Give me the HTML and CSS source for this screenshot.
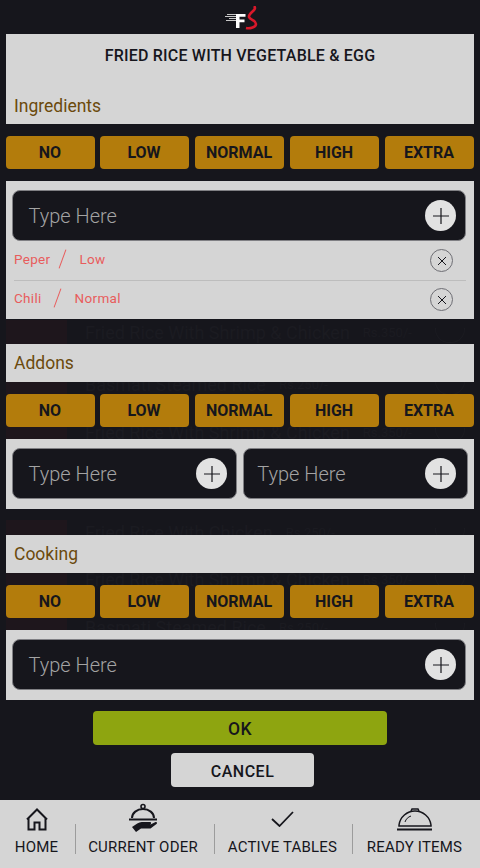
FILE: index.html
```html
<!DOCTYPE html>
<html lang="en">
<head>
    <meta charset="UTF-8">
    <meta name="viewport" content="width=device-width, initial-scale=1.0">
    <title>Item Options</title>
    <link rel="stylesheet" href="styles.css">
</head>
<body>
    <!-- dimmed list behind the dialog -->
    <div class="ghost">
        <div class="ghost-row r1"><span class="ghost-thumb"></span><span class="ghost-name">Fried Rice With Shrimp &amp; Chicken</span><span class="ghost-price">Rs.350/-</span><span class="ghost-icon"></span></div>
        <div class="ghost-row r2"><span class="ghost-thumb"></span><span class="ghost-name">Basmati Steamed Rice</span><span class="ghost-price">Rs.250/-</span><span class="ghost-icon"></span></div>
        <div class="ghost-row r3"><span class="ghost-thumb"></span><span class="ghost-name">Fried Rice With Shrimp &amp; Chicken</span><span class="ghost-price">Rs.350/-</span><span class="ghost-icon"></span></div>
        <div class="ghost-row r4"><span class="ghost-thumb"></span><span class="ghost-name">Fried Rice With Chicken</span><span class="ghost-price">Rs.250/-</span><span class="ghost-icon"></span></div>
        <div class="ghost-row r5"><span class="ghost-thumb"></span><span class="ghost-name">Fried Rice With Shrimp &amp; Chicken</span><span class="ghost-price">Rs.350/-</span><span class="ghost-icon"></span></div>
        <div class="ghost-row r6"><span class="ghost-thumb"></span><span class="ghost-name">Basmati Steamed Rice</span><span class="ghost-price">Rs.250/-</span><span class="ghost-icon"></span></div>
    </div>

    <header class="logo">
        <svg width="34" height="24" viewBox="0 0 34 24">
            <path d="M2 8.500h10M0 10.500h11M4 12.500h7M1 14.500h10" stroke="#c8c8c8" stroke-width="1" fill="none"/>
            <path d="M11 8h9.500v2.800H14.500v2.700h5v2.700h-5V22H11z" fill="#fff"/>
            <path d="M29 0C33 4 23 7 24 11C25 14 31 14 31 18C31 21 25 23 21 22" stroke="#d8182a" stroke-width="2.600" fill="none"/>
        </svg>
    </header>

    <main class="dialog">
        <section class="panel panel-title">
            <h1>FRIED RICE WITH VEGETABLE &amp; EGG</h1>
            <h2>Ingredients</h2>
        </section>
        <div class="levels">
            <button>NO</button><button>LOW</button><button>NORMAL</button><button>HIGH</button><button>EXTRA</button>
        </div>
        <section class="panel panel-body panel-list">
            <div class="field">
                <span>Type Here</span>
                <span class="add"><svg width="18" height="18" viewBox="0 0 18 18"><path d="M9 1v16M1 9h16"/></svg></span>
            </div>
            <div class="picked">
                <span>Peper</span><span class="slash w1"></span><span>Low</span>
                <span class="remove"><svg width="10" height="10" viewBox="0 0 10 10"><path d="M1 1l8 8M9 1l-8 8"/></svg></span>
            </div>
            <div class="picked last">
                <span>Chili</span><span class="slash w2"></span><span>Normal</span>
                <span class="remove"><svg width="10" height="10" viewBox="0 0 10 10"><path d="M1 1l8 8M9 1l-8 8"/></svg></span>
            </div>
        </section>

        <section class="panel panel-head addons"><h2>Addons</h2></section>
        <div class="levels">
            <button>NO</button><button>LOW</button><button>NORMAL</button><button>HIGH</button><button>EXTRA</button>
        </div>
        <section class="panel panel-body double">
            <div class="field">
                <span>Type Here</span>
                <span class="add"><svg width="18" height="18" viewBox="0 0 18 18"><path d="M9 1v16M1 9h16"/></svg></span>
            </div>
            <div class="field field-right">
                <span>Type Here</span>
                <span class="add"><svg width="18" height="18" viewBox="0 0 18 18"><path d="M9 1v16M1 9h16"/></svg></span>
            </div>
        </section>

        <section class="panel panel-head cooking"><h2>Cooking</h2></section>
        <div class="levels">
            <button>NO</button><button>LOW</button><button>NORMAL</button><button>HIGH</button><button>EXTRA</button>
        </div>
        <section class="panel panel-body panel-single">
            <div class="field">
                <span>Type Here</span>
                <span class="add"><svg width="18" height="18" viewBox="0 0 18 18"><path d="M9 1v16M1 9h16"/></svg></span>
            </div>
        </section>

        <div class="actions">
            <button class="ok">OK</button>
            <button class="cancel">CANCEL</button>
        </div>
    </main>

    <nav class="tabs">
        <a class="tab tab-home">
            <svg width="24" height="24" viewBox="0 0 24 24"><path d="M2 12.500L12 2.500l10 10M3.500 11v11.500h6v-7h5v7h6V11" fill="none" stroke="#16161c" stroke-width="2"/></svg>
            <span>HOME</span>
        </a>
        <a class="tab tab-order">
            <svg width="30" height="32" viewBox="0 0 30 32">
                <circle cx="15" cy="3.500" r="2" fill="none" stroke="#16161c" stroke-width="1.600"/>
                <path d="M4 15c0-5 5-9 11-9s11 4 11 9" fill="none" stroke="#16161c" stroke-width="2"/>
                <path d="M1 16.500h28" stroke="#16161c" stroke-width="2"/>
                <path d="M7 22c3-2.500 6-3 9-3h6c1.500 0 1.500 2 0 2.500h-5.500 6l5-2.500c1.500-.500 2 1 1 2l-6 4.500H13l-5 3.500-4-5z" fill="#16161c"/>
            </svg>
            <span>CURRENT ODER</span>
        </a>
        <a class="tab tab-active">
            <svg width="24" height="16" viewBox="0 0 24 16"><path d="M1 8l7.500 7L22 1" fill="none" stroke="#16161c" stroke-width="1.800"/></svg>
            <span>ACTIVE TABLES</span>
        </a>
        <a class="tab tab-ready">
            <svg width="36" height="24" viewBox="0 0 36 24">
                <path d="M14 4l1-2h6l1 2" fill="none" stroke="#16161c" stroke-width="1.500"/>
                <path d="M2 19v-1C3 10 10 4 18 4s15 6 16 14v1z" fill="none" stroke="#16161c" stroke-width="1.500"/>
                <path d="M8 15c1-3 3-5 6-6" fill="none" stroke="#16161c" stroke-width="1"/>
                <path d="M0 22.500h35" stroke="#16161c" stroke-width="2"/>
            </svg>
            <span>READY ITEMS</span>
        </a>
    </nav>
</body>
</html>
```

FILE: styles.css
```css
html, body {
    margin: 0;
    padding: 0;
}

body {
    position: relative;
    width: 480px;
    height: 868px;
    overflow: hidden;
    background-color: #16161c;
    font-family: Roboto, "Liberation Sans", sans-serif;
    color: #16161c;
}

.ghost {
    position: absolute;
    top: 0;
    left: 0;
    width: 100%;
    height: 100%;
}

.ghost-row {
    position: absolute;
    left: 6px;
    right: 6px;
    display: flex;
    align-items: flex-start;
    color: #1b1b21;
    font-size: 18px;
    line-height: 26px;
}

.r1 { top: 320px; }
.r2 { top: 372px; }
.r3 { top: 420px; }
.r4 { top: 520px; }
.r5 { top: 567px; }
.r6 { top: 615px; }

.ghost-thumb {
    width: 61px;
    height: 44px;
    margin-right: 18px;
    background-color: #1e161c;
}

.ghost-price {
    margin-left: 13px;
    font-size: 13px;
}

.ghost-icon {
    width: 28px;
    height: 14px;
    margin: 8px 9px 0 auto;
    border: 1px solid #1b1b21;
    border-top: none;
    border-radius: 0 0 14px 14px;
}

.logo {
    position: relative;
    display: flex;
    justify-content: center;
    height: 34px;
    box-sizing: border-box;
    padding: 6px 0 0 4px;
}

.dialog {
    position: relative;
    display: flex;
    flex-direction: column;
    padding: 0 6px;
}

.panel {
    background-color: #d5d5d5;
}

.panel-title {
    height: 90px;
    box-sizing: border-box;
    padding: 12px 8px 0;
}

h1 {
    margin: 0;
    text-align: center;
    font-size: 16px;
    font-weight: 500;
    line-height: 20px;
    letter-spacing: 0.2px;
    color: #16161c;
}

h2 {
    margin: 0;
    font-size: 17.500px;
    font-weight: 400;
    line-height: 24px;
    color: #6b4a0c;
}

.panel-title h2 {
    margin-top: 28px;
}

.levels {
    display: flex;
    gap: 6px;
    margin: 12px 0;
}

.levels button {
    width: 89px;
    height: 33px;
    padding: 0 1px 0 0;
    border: none;
    border-radius: 4px;
    background-color: #b37c0c;
    color: #16161c;
    font-family: Roboto, "Liberation Sans", sans-serif;
    font-size: 16px;
    font-weight: 700;
}

.levels button:first-child {
    margin-right: -1px;
}

.panel-body {
    padding: 9px 6px 10px;
}

.panel-list {
    height: 138px;
    box-sizing: border-box;
    padding: 9px 8px 0 6px;
}

.panel-single {
    padding-right: 8px;
}

.double {
    display: flex;
    gap: 6px;
}

.panel-head {
    height: 38px;
    box-sizing: border-box;
    padding: 7px 8px 0;
    margin-top: 25px;
}

.cooking {
    margin-top: 26px;
}

.field {
    flex: 1;
    display: flex;
    align-items: center;
    justify-content: space-between;
    height: 51px;
    box-sizing: border-box;
    padding: 0 9px 0 15.500px;
    border: 1px solid #808084;
    border-radius: 8px;
    background-color: #16161c;
    color: #a3a3a3;
    font-size: 20px;
    font-weight: 300;
}

.field-right {
    padding: 0 11px 0 13px;
}

.add {
    display: flex;
    align-items: center;
    justify-content: center;
    width: 31px;
    height: 31px;
    border-radius: 50%;
    background-color: #e2e2e2;
}

.add path {
    stroke: #16161c;
    stroke-width: 1.200;
    fill: none;
}

.picked {
    display: flex;
    align-items: center;
    height: 40px;
    box-sizing: border-box;
    margin: 0 0 0 2px;
    padding-bottom: 3px;
    border-bottom: 1px solid #bdbdbd;
    color: #e85c5c;
    font-size: 13.500px;
    letter-spacing: 0.3px;
}

.picked.last {
    height: 38px;
    padding-bottom: 4px;
    border-bottom: none;
}

.slash {
    width: 1px;
    height: 20px;
    background-color: #e85c5c;
    transform: rotate(20deg);
}

.w1 { margin: 0 16px 0 12px; }
.w2 { margin: 0 17px 0 15px; }

.remove {
    display: flex;
    align-items: center;
    justify-content: center;
    width: 21px;
    height: 21px;
    margin: 3px 13px 0 auto;
    border: 1px solid #6e6e74;
    border-radius: 50%;
}

.remove path {
    stroke: #16161c;
    stroke-width: 1;
    fill: none;
}

.actions {
    display: flex;
    flex-direction: column;
    align-items: center;
}

.ok {
    width: 294px;
    height: 34px;
    margin-top: 11px;
    padding: 2px 0 0;
    border: none;
    border-radius: 4px;
    background-color: #8ea510;
    color: #16161c;
    font-family: Roboto, "Liberation Sans", sans-serif;
    font-size: 17.500px;
    font-weight: 500;
    letter-spacing: 0.5px;
}

.cancel {
    width: 143px;
    height: 34px;
    margin: 8px 0 0 5px;
    padding: 2px 0 0;
    border: none;
    border-radius: 4px;
    background-color: #d5d5d5;
    color: #16161c;
    font-family: Roboto, "Liberation Sans", sans-serif;
    font-size: 16px;
    font-weight: 500;
    letter-spacing: 0.5px;
}

.tabs {
    position: absolute;
    left: 0;
    right: 0;
    bottom: 0;
    display: flex;
    height: 68px;
    background-color: #d5d5d5;
}

.tab {
    position: relative;
    display: flex;
    flex-direction: column;
    align-items: center;
    justify-content: flex-end;
    box-sizing: border-box;
    height: 100%;
    padding-bottom: 12px;
    font-size: 15px;
    line-height: 18px;
    letter-spacing: 0.2px;
    color: #16161c;
    white-space: nowrap;
}

.tab-home { width: 75px; padding-right: 2px; }
.tab-order { width: 139px; padding-right: 3px; }
.tab-active { width: 138px; padding-right: 1px; }
.tab-ready { width: 128px; padding-right: 3px; }

.tab-home svg { margin-bottom: 7px; }
.tab-order svg { margin-bottom: 3px; }
.tab-active svg { margin-bottom: 11px; }
.tab-ready svg { margin-bottom: 7px; }

.tab-order::before,
.tab-active::before,
.tab-ready::before {
    content: "";
    position: absolute;
    left: 0;
    top: 24px;
    height: 30px;
    width: 1px;
    background-color: #9c9c9c;
}
```
